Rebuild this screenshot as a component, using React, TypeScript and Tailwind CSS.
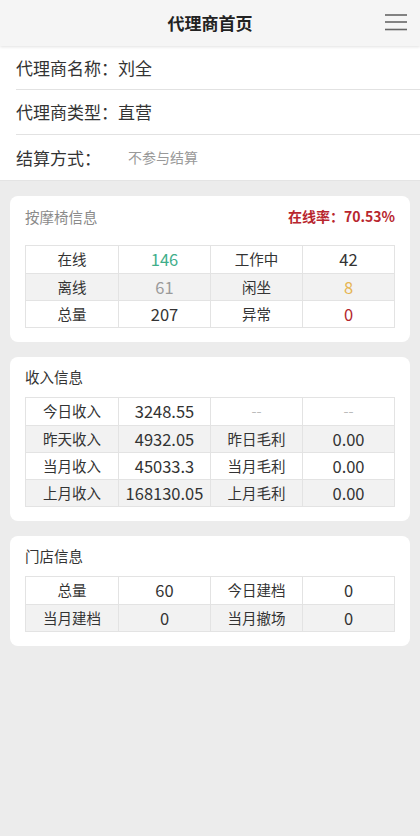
import React from "react";

type Cell = { text: string; color?: string };

const FONT = "font-['Noto_Sans_CJK_SC','Noto_Sans',sans-serif]";

function StatTable({ rows }: { rows: Cell[][] }) {
  return (
    <div className="border border-[#e3e3e3]">
      {rows.map((row, i) => (
        <div
          key={i}
          className={`grid grid-cols-4 h-[27px] ${i > 0 ? "border-t border-[#e3e3e3]" : ""} ${
            i % 2 === 1 ? "bg-[#f2f2f2]" : "bg-white"
          }`}
        >
          {row.map((c, j) => {
            const isNum = /^[\d.]+$/.test(c.text);
            return (
              <div
                key={j}
                className={`flex items-center justify-center leading-none ${
                  isNum ? "text-[16.5px]" : "text-[14.5px]"
                } ${j > 0 ? "border-l border-[#e3e3e3]" : ""} ${c.color ?? "text-[#333]"}`}
              >
                {c.text}
              </div>
            );
          })}
        </div>
      ))}
    </div>
  );
}

function Card({
  title,
  titleClass,
  right,
  headClass,
  children,
}: {
  title: string;
  titleClass: string;
  right?: React.ReactNode;
  headClass: string;
  children: React.ReactNode;
}) {
  return (
    <div className="mx-[10px] rounded-[8px] bg-white px-[15px] pb-[14px]">
      <div className={`flex items-center justify-between ${headClass}`}>
        <span className={`text-[14.5px] ${titleClass}`}>{title}</span>
        {right}
      </div>
      {children}
    </div>
  );
}

export default function App() {
  const chair: Cell[][] = [
    [{ text: "在线" }, { text: "146", color: "text-[#3fae8a]" }, { text: "工作中" }, { text: "42" }],
    [{ text: "离线" }, { text: "61", color: "text-[#9a9a9a]" }, { text: "闲坐" }, { text: "8", color: "text-[#e6b552]" }],
    [{ text: "总量" }, { text: "207" }, { text: "异常" }, { text: "0", color: "text-[#b3262c]" }],
  ];
  const income: Cell[][] = [
    [{ text: "今日收入" }, { text: "3248.55" }, { text: "--", color: "text-[#bbb]" }, { text: "--", color: "text-[#bbb]" }],
    [{ text: "昨天收入" }, { text: "4932.05" }, { text: "昨日毛利" }, { text: "0.00" }],
    [{ text: "当月收入" }, { text: "45033.3" }, { text: "当月毛利" }, { text: "0.00" }],
    [{ text: "上月收入" }, { text: "168130.05" }, { text: "上月毛利" }, { text: "0.00" }],
  ];
  const store: Cell[][] = [
    [{ text: "总量" }, { text: "60" }, { text: "今日建档" }, { text: "0" }],
    [{ text: "当月建档" }, { text: "0" }, { text: "当月撤场" }, { text: "0" }],
  ];

  return (
    <div className={`min-h-[836px] bg-[#ececec] ${FONT} text-[#333]`}>
      {/* 顶部标题栏 */}
      <div className="relative flex h-[46px] items-center justify-center bg-[#f5f5f5] shadow-[0_1px_3px_rgba(0,0,0,0.12)]">
        <span className="text-[17px] font-bold text-[#222]">代理商首页</span>
        <svg className="absolute right-[12px] top-[12px]" width="24" height="20" viewBox="0 0 24 20">
          <g stroke="#666" strokeWidth="1.6">
            <line x1="1" y1="3" x2="23" y2="3" />
            <line x1="1" y1="10" x2="23" y2="10" />
            <line x1="1" y1="17.5" x2="23" y2="17.5" />
          </g>
        </svg>
      </div>

      {/* 代理商信息 */}
      <div className="bg-white pl-[16px]">
        <div className="flex h-[44px] items-center border-b border-[#e2e2e2] text-[17px]">代理商名称：刘全</div>
        <div className="flex h-[45px] items-center border-b border-[#e2e2e2] text-[17px]">代理商类型：直营</div>
        <div className="flex h-[45px] items-center text-[17px]">
          <span className="w-[112px]">结算方式：</span>
          <span className="text-[14px] text-[#999]">不参与结算</span>
        </div>
      </div>

      <div className="flex flex-col gap-[15px] pt-[15px] pb-[20px] border-t border-[#e4e4e4]">
        <Card
          title="按摩椅信息"
          titleClass="text-[#8a8a8a]"
          headClass="h-[40px] mb-[9px] pt-[1px]"
          right={<span className="text-[14px] font-bold text-[#b8262e]">在线率：70.53%</span>}
        >
          <StatTable rows={chair} />
        </Card>

        <Card title="收入信息" titleClass="text-[#333]" headClass="h-[40px]">
          <StatTable rows={income} />
        </Card>

        <Card title="门店信息" titleClass="text-[#333]" headClass="h-[40px]">
          <StatTable rows={store} />
        </Card>
      </div>
    </div>
  );
}
